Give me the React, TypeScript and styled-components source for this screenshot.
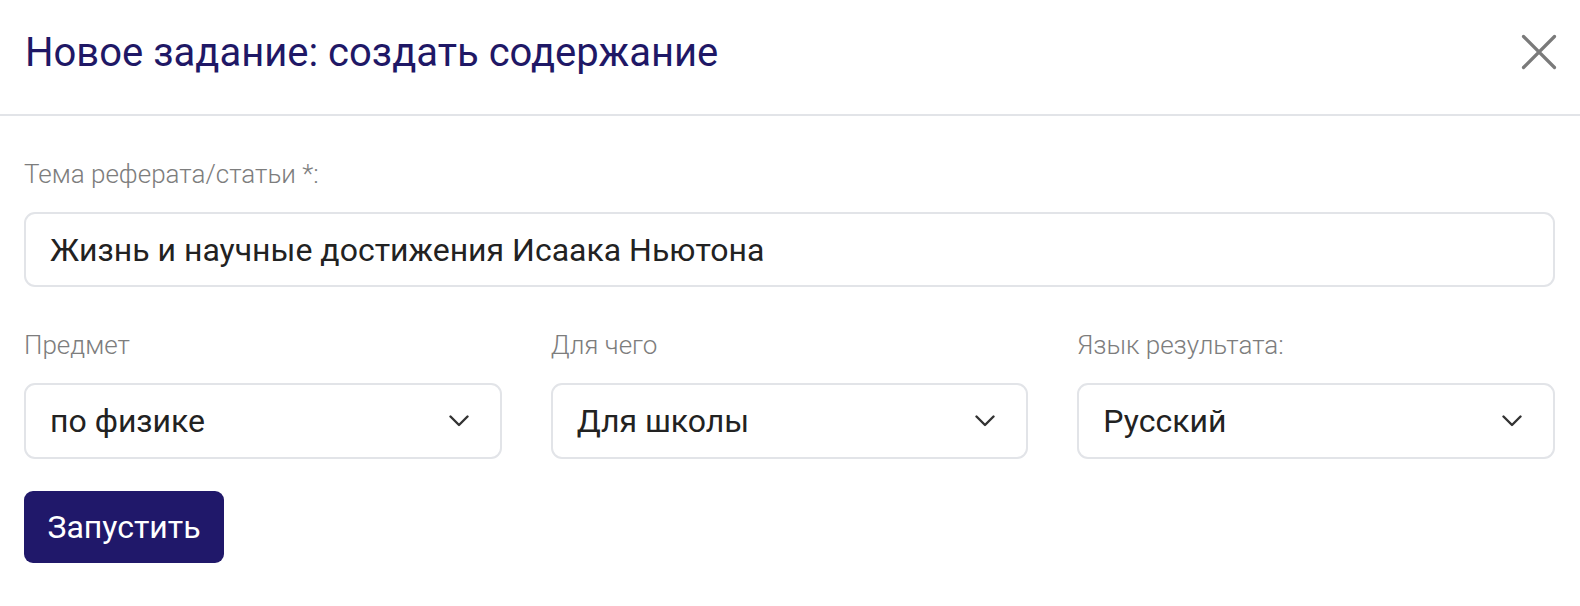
import React from "react";
import styled, { createGlobalStyle } from "styled-components";

const Global = createGlobalStyle`
  html, body { margin: 0; padding: 0; background: #fff; }
  body { font-family: Roboto, "Noto Sans", sans-serif; }
  * { box-sizing: border-box; }
`;

const Dialog = styled.div`
  width: 1580px;
  background: #fff;
`;

const Header = styled.div`
  height: 116px;
  display: flex;
  align-items: center;
  justify-content: space-between;
  padding: 0 23px 10px 25px;
  border-bottom: 2px solid #e2e4e8;
`;

const Title = styled.h1`
  margin: 0;
  font-family: Roboto, sans-serif;
  font-weight: 400;
  font-size: 40px;
  color: #1f1866;
  letter-spacing: 0;
`;

const CloseButton = styled.button`
  border: none;
  background: none;
  padding: 0;
  width: 36px;
  height: 36px;
  display: flex;
  align-items: center;
  justify-content: center;
  cursor: pointer;
`;

const Body = styled.div`
  padding: 44px 25px 0 24px;
  display: flex;
  flex-direction: column;
`;

const Label = styled.div`
  font-family: Roboto, sans-serif;
  font-weight: 300;
  font-size: 26px;
  color: #7d7d7d;
  line-height: 28px;
  margin-bottom: 24px;
`;

const Field = styled.div`
  display: flex;
  flex-direction: column;
`;

const Input = styled.div`
  height: 75px;
  border: 2px solid #e2e4e8;
  border-radius: 11px;
  display: flex;
  align-items: center;
  padding: 0 24px;
  font-size: 32px;
  color: #222;
`;

const Row = styled.div`
  display: grid;
  grid-template-columns: repeat(3, 1fr);
  gap: 49px;
  margin-top: 44px;
`;

const Select = styled(Input)`
  height: 76px;
  justify-content: space-between;
  padding: 0 31px 0 24px;
`;

const Button = styled.button`
  margin-top: 32px;
  width: 200px;
  height: 72px;
  border: none;
  border-radius: 9px;
  background: #20186a;
  color: #fff;
  font-family: Roboto, sans-serif;
  font-size: 32px;
  font-weight: 400;
  cursor: pointer;
  padding: 0;
`;

const Chevron = () => (
  <svg width="20" height="12" viewBox="0 0 20 12" fill="none" stroke="#333" strokeWidth="2.4" strokeLinecap="round" strokeLinejoin="round">
    <path d="M1.5 1.5l8.5 8.5 8.5-8.5" />
  </svg>
);

const selects = [
  { label: "Предмет", value: "по физике" },
  { label: "Для чего", value: "Для школы" },
  { label: "Язык результата:", value: "Русский" },
];

export default function App() {
  return (
    <Dialog>
      <Global />
      <Header>
        <Title>Новое задание: создать содержание</Title>
        <CloseButton aria-label="close">
          <svg width="36" height="36" viewBox="0 0 36 36" stroke="#7a7a7a" strokeWidth="3.2" strokeLinecap="round">
            <path d="M2.5 2.5L33.5 33.5M33.5 2.5L2.5 33.5" />
          </svg>
        </CloseButton>
      </Header>
      <Body>
        <Field>
          <Label>Тема реферата/статьи *:</Label>
          <Input>Жизнь и научные достижения Исаака Ньютона</Input>
        </Field>
        <Row>
          {selects.map((s) => (
            <Field key={s.label}>
              <Label>{s.label}</Label>
              <Select>
                <span>{s.value}</span>
                <Chevron />
              </Select>
            </Field>
          ))}
        </Row>
        <div>
          <Button>Запустить</Button>
        </div>
      </Body>
    </Dialog>
  );
}
